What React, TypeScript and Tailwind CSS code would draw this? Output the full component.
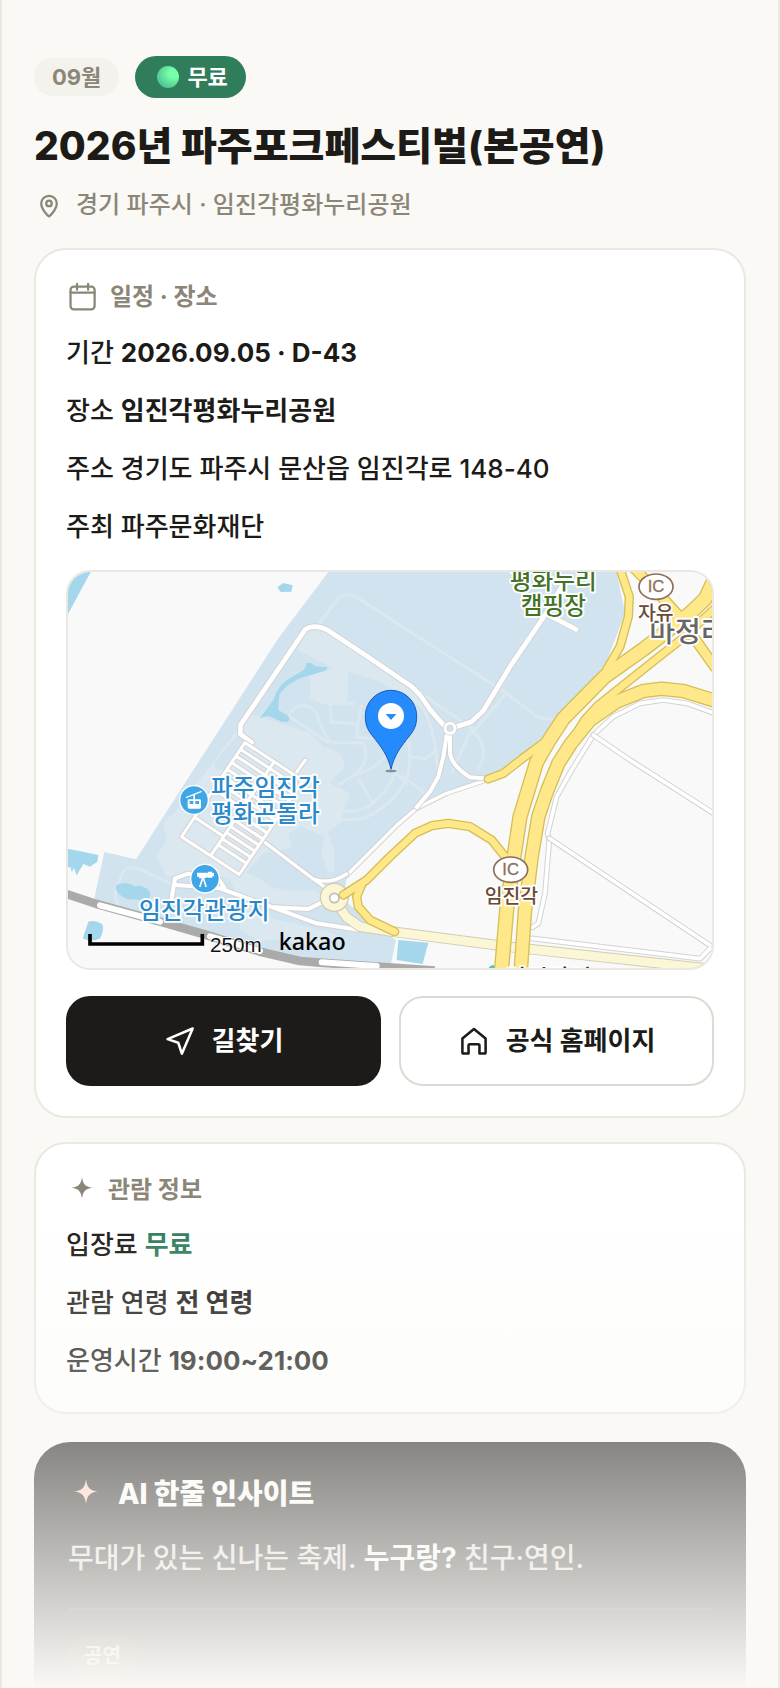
import type { ReactNode } from "react";

type IconProps = { className?: string };

function PinIcon({ className }: IconProps) {
  return (
    <svg viewBox="0 0 24 24" fill="none" stroke="currentColor" strokeWidth="1.8" strokeLinejoin="round" className={className} aria-hidden="true">
      <path d="M12 21.200s-6.200-5.200-6.200-10.400a6.200 6.200 0 0 1 12.400 0c0 5.200-6.200 10.400-6.200 10.400z" />
      <circle cx="12" cy="10.700" r="2.200" />
    </svg>
  );
}

function CalendarIcon({ className }: IconProps) {
  return (
    <svg viewBox="0 0 24 24" fill="none" stroke="currentColor" strokeWidth="1.6" strokeLinecap="round" className={className} aria-hidden="true">
      <rect x="3.2" y="4.600" width="17" height="16.200" rx="2.4" />
      <path d="M3.2 8.900h17M7.800 2.800v4M15.600 2.800v4" />
    </svg>
  );
}

function SparkIcon({ className }: IconProps) {
  return (
    <svg viewBox="0 0 24 24" fill="currentColor" className={className} aria-hidden="true">
      <path d="M12 2.300c.8 5.200 2.200 7.200 7.700 8.100-5.500.9-6.900 2.900-7.700 8.100-.8-5.200-2.200-7.200-7.700-8.100 5.500-.9 6.900-2.900 7.700-8.100z" />
    </svg>
  );
}

function ArrowIcon({ className }: IconProps) {
  return (
    <svg viewBox="0 0 24 24" fill="none" stroke="currentColor" strokeWidth="1.9" strokeLinejoin="round" className={className} aria-hidden="true">
      <path d="M21.500 2.600 2.700 10.600l8 2.700 2.700 8.200z" />
    </svg>
  );
}

function HomeIcon({ className }: IconProps) {
  return (
    <svg viewBox="0 0 24 24" fill="none" stroke="currentColor" strokeWidth="1.9" strokeLinejoin="round" className={className} aria-hidden="true">
      <path d="M3.300 10.200 12 3l8.700 7.200v10.200a1 1 0 0 1-1 1h-3.600v-6a1 1 0 0 0-1-1H8.900a1 1 0 0 0-1 1v6H4.300a1 1 0 0 1-1-1z" />
    </svg>
  );
}

type RoadProps = { d: string; width: number; color?: string; edge?: string; cap?: "butt" | "round" };

function Road({ d, width, color = "#ffffff", edge = "#d3d3d3", cap = "round" }: RoadProps) {
  return (
    <g fill="none" strokeLinejoin="round" strokeLinecap={cap}>
      <path d={d} stroke={edge} strokeWidth={width + 6} />
      <path d={d} stroke={color} strokeWidth={width} />
    </g>
  );
}

const HIGHWAYS = [
  { d: "M1656-10 1684 74 1681 134 1656 224 1615 294", width: 20 },
  { d: "M1700-10 1766 58 1826 124 1876 194 1940 284", width: 26 },
  { d: "M1500 524 1550 444 1590 400 1766 260 1836 205 1940 110", width: 20 },
  { d: "M1261 621 1306 604 1360 562 1430 510", width: 20 },
  { d: "M1300 1200 1316 1014 1338 854 1356 734 1406 570 1444 504 1486 440 1610 314 1726 232 1866 124 1912 80 1940 20", width: 38 },
  { d: "M1358 1200 1371 1014 1391 854 1411 734 1436 660 1471 574 1508 516 1566 444 1646 389 1726 357 1781 350 1846 357 1940 386", width: 36 },
  { d: "M826 969 896 924 966 854 1041 784 1091 761 1141 754 1206 764 1271 804 1311 854", width: 20 },
  { d: "M881 938 866 974 871 1004 906 1044 980 1079", width: 20 },
];

const FOOTPATHS = [
  "M754 154 810 80Q830 62 860 72L966 140 1310 360 1410 436 1470 446",
  "M1030 344 1220 474 1310 370",
  "M660 430 780 512M666 424q40-50 80 0 20 60 40 86l100 4",
  "M786 394 790 450 870 456 880 398M786 394 860 396",
  "M870 456 866 496 910 500 950 480",
  "M800 690q20 50 100 14 70-50 86-120M808 640l50-30q50-40 30-100",
  "M856 608q60-10 100-60M870 620l46 76M960 580l60 60M1000 610l80 60",
  "M1016 500q20 40 0 120-40 80-130 120l-100 6",
  "M1060 400q40 60 50 200M1020 552l50 10 40-30",
  "M1210 474l-60 130M1210 474q60 50 20 120",
  "M140 970l20-60q10-30 50-20l110 50M140 970l10 30",
];

const ROWS_TOP = [0, 24, 48, 72, 96, 120, 144, 168];
const ROWS_BOTTOM = [190, 212, 234, 256, 278, 300];

function ParkingLot() {
  const lines = [
    "M0 0V340",
    "M104 0V340",
    "M206 0V340",
    "M0 340H206",
    "M0 270H104",
    ...ROWS_TOP.map((y) => `M0 ${y}H206`),
    ...ROWS_BOTTOM.map((y) => `M104 ${y}H206`),
  ].join("");

  return (
    <>
      <Road d="M670 622 712 564" width={9} />
      <g transform="matrix(.84 .55 -.56 .83 531 512)">
        <Road d={lines} width={9} />
      </g>
    </>
  );
}

type LabelProps = { x: number; y: number; size: number; color: string; anchor?: "start" | "middle"; children: ReactNode };

function MapLabel({ x, y, size, color, anchor = "start", children }: LabelProps) {
  return (
    <text x={x} y={y} fontSize={size} fill={color} textAnchor={anchor} stroke="#ffffff" strokeWidth="11" strokeLinejoin="round" paintOrder="stroke" fontWeight="500">
      {children}
    </text>
  );
}

function Interchange({ x, y }: { x: number; y: number }) {
  return (
    <g>
      <ellipse cx={x} cy={y} rx="51" ry="38" fill="#ffffff" stroke="#8d705c" strokeWidth="5" />
      <text x={x} y={y + 17} fontSize="50" fill="#8d705c" stroke="#8d705c" strokeWidth="1" textAnchor="middle" fontFamily="Liberation Sans, sans-serif">
        IC
      </text>
    </g>
  );
}

function VenueMap() {
  return (
    <svg
      viewBox="0 0 1932 1188"
      preserveAspectRatio="xMidYMid slice"
      role="img"
      aria-label="임진각평화누리공원 지도"
      className="block w-full font-['Noto_Sans_CJK_KR',sans-serif]"
    >
      <rect width="1932" height="1188" fill="#f9f9f9" />

      {/* park */}
      <path
        d="M781 0 631 199 376 594 204 862 109 840 79 979 90 1000 276 1049 416 1089 576 1139 696 1167 966 1190 984 1104 826 984 836 920 966 779 1046 709 1136 664 1261 622 1416 514 1606 294 1671 124 1646 0z"
        fill="#d1e3ef"
      />
      <g fill="#dce8ef">
        <path d="M712 178 740 160 966 304 1040 352 1090 430 1050 400 936 330 841 299 838 394 776 400 726 380V310L800 290 691 236z" />
        <path d="M516 480 536 510 476 594 441 594 440 570zM326 714l-40 40 10 50-30 50 30 60 60-10 160 20 70-80 150-30 80-60 30-90-60-30 40-50-100-100-180-60z" />
        <path d="M746 540l30-14 34 14q30 30 10 60l-40 20-10 140 30 80v60h-20l-40-110-80-30 40-160z" />
        <path d="M476 904q60-20 130 40 60 20 130 10l40 20-80 40-190-50zM516 1010q60-20 100 30l170 40 60 30-170-20-100 20-60-40z" />
        <path d="M580 1096l120-20 100 16-60 30z" />
      </g>
      <path d="M661 784l40-20 70 30-16 70-50 32-30-60z" fill="#d1e3ef" />
      <g fill="none" stroke="#dce8ef" strokeWidth="9" strokeLinejoin="round">
        {FOOTPATHS.map((d) => (
          <path key={d} d={d} />
        ))}
      </g>

      {/* water */}
      <g fill="#a4d6ec">
        <path d="M0 0H68L0 126zM628 46 646 33 674 40 670 59 638 60z" />
        <path d="M576 439 616 384Q630 340 660 322L708 294Q720 270 714 274 728 268 740 282L779 286 771 296 696 319Q650 340 634 369L631 414 661 432Q668 446 658 450L641 449 601 431z" />
        <path d="M0 830 91 849 88 869 66 884 46 876 26 910 18 888 11 900 8 886 0 886zM146 939q30-14 55 5 20-10 45 15v26l-70-4q-40-20-30-42zM61 1049q20-6 40 6 10 10-4 44-26 14-53 0z" />
        <path d="M991 1104 1081 1112 1064 1176 986 1164z" />
        <circle cx="1275" cy="1194" r="14" fill="#4fc0cc" />
      </g>

      {/* railway */}
      <g fill="none" strokeLinejoin="round">
        <path d="M-10 964 86 996 276 1049 416 1089 576 1139 696 1167 756 1172 1100 1196" stroke="#aaaaaa" strokeWidth="26" />
        <path d="M96 1000 276 1049M426 1093 576 1137M761 1171 926 1182" stroke="#ffffff" strokeWidth="18" strokeLinecap="round" />
      </g>

      {/* local roads */}
      <Road d="M1940 424 1856 394 1786 384 1716 394 1636 434 1576 489 1511 594 1466 674 1439 784 1444 804 1431 964 1411 1054 1394 1066" width={11} />
      <Road d="M1576 489 1686 564 1940 726M1444 799 1926 1120M1391 1099 1896 1160 1926 1130" width={11} />
      <Road d="M1261 622 1136 664 1046 709 986 760 836 910" width={10} />
      <Road d="M561 789 736 921 776 949M736 921Q786 939 836 906" width={10} />
      <Road d="M311 979 321 919 361 905 456 927 470 949M326 939 456 949 616 1007 746 1054 876 1074M616 1006 721 1011 766 989" width={12} />
      <Road d="M551 512 517 486 518 458 712 172Q740 155 778 174L896 252 1031 344 1056 369 1091 419 1131 464M1161 466 1211 449 1246 416 1326 284 1431 129 1481 44M1451 134 1524 172" width={14} />
      <Road d="M1136 489 1126 554 1111 614 1086 659 1046 706M1146 489V544Q1150 580 1206 616L1261 620" width={12} />
      <circle cx="1146" cy="469" r="15" fill="#d1e3ef" stroke="#d3d3d3" strokeWidth="14" />
      <circle cx="1146" cy="469" r="15" fill="none" stroke="#ffffff" strokeWidth="9" />
      <ParkingLot />

      {/* provincial road and roundabout */}
      <Road d="M810 1000 836 1036 876 1064 966 1078 1336 1126 1940 1192" width={26} color="#fbf6d6" edge="#d2cbb4" />
      <circle cx="799" cy="976" r="42" fill="#fbf6d6" stroke="#d2cbb4" strokeWidth="4" />
      <circle cx="799" cy="978" r="14" fill="#ffffff" stroke="#bdbdbd" strokeWidth="5" />

      {/* highways */}
      <g fill="none" strokeLinejoin="round" strokeLinecap="round">
        {HIGHWAYS.map((road) => (
          <path key={road.d} d={road.d} stroke="#d5bf55" strokeWidth={road.width + 8} />
        ))}
        {HIGHWAYS.map((road) => (
          <path key={road.d} d={road.d} stroke="#ffe88a" strokeWidth={road.width} />
        ))}
      </g>

      {/* places */}
      <MapLabel x={1456} y={50} size={71} color="#447227" anchor="middle">평화누리</MapLabel>
      <MapLabel x={1456} y={126} size={71} color="#447227" anchor="middle">캠핑장</MapLabel>
      <MapLabel x={1744} y={209} size={84} color="#666666">마정리</MapLabel>
      <MapLabel x={1710} y={143} size={58} color="#6b4a35">자유</MapLabel>
      <Interchange x={1764} y={44} />
      <MapLabel x={1330} y={993} size={58} color="#6b4a35" anchor="middle">임진각</MapLabel>
      <Interchange x={1328} y={893} />
      <MapLabel x={1440} y={1246} size={71} color="#333333" anchor="middle">임진강역</MapLabel>
      <MapLabel x={429} y={671} size={71} color="#2a89cb">파주임진각</MapLabel>
      <MapLabel x={429} y={751} size={71} color="#2a89cb">평화곤돌라</MapLabel>
      <MapLabel x={213} y={1041} size={71} color="#2a89cb">임진각관광지</MapLabel>

      <circle cx="378" cy="684" r="43" fill="#3fa6e8" stroke="#ffffff" strokeWidth="4" />
      <path d="M354 677 401 658" stroke="#ffffff" strokeWidth="4" />
      <path d="M376 668h5v14h14q4 0 4 4v20q0 4-4 4h-32q-4 0-4-4v-20q0-4 4-4h13zM365 687v9h11v-9zm17 0v9h11v-9z" fill="#ffffff" fillRule="evenodd" />
      <circle cx="411" cy="920" r="43" fill="#3fa6e8" stroke="#ffffff" strokeWidth="4" />
      <path d="M387 902h33v-3h13v4h5v10h-5v4h-13v-1l-11 3 8 26h-5l-7-22-7 22h-5l8-26h-8v-5h-6z" fill="#ffffff" />

      {/* marker */}
      <ellipse cx="969" cy="597" rx="17" ry="4" fill="#7f909f" />
      <path d="M969 592C960 550 938 522 913 491 896 470 892 455 892 432a77 77 0 0 1 154 0c0 23-4 38-21 59-25 31-47 59-56 101z" fill="#258bfc" stroke="#1c5bbd" strokeWidth="3" />
      <circle cx="969" cy="432" r="39" fill="#ffffff" />
      <path d="M953 426h32l-16 18z" fill="#258bfc" />

      {/* scale */}
      <path d="M66 1086V1116H403V1086" fill="none" stroke="#000000" strokeWidth="11" />
      <text x="426" y="1139" fontSize="62" fill="#111111" stroke="#ffffff" strokeWidth="4" paintOrder="stroke" fontFamily="Liberation Sans, sans-serif">
        250m
      </text>
      <text x="632" y="1134" fontSize="70" fontWeight="500" fill="#000000" fontFamily="Noto Sans, sans-serif">
        kakao
      </text>
    </svg>
  );
}

function Card({ children }: { children: ReactNode }) {
  return (
    <section className="rounded-[32px] border-2 border-[#eae8e0] bg-white p-[30px]">
      {children}
    </section>
  );
}

function CardTitle({ icon, children }: { icon: ReactNode; children: ReactNode }) {
  return (
    <h2 className="mb-[18px] flex items-center gap-2.5 text-2xl/[30px] font-bold text-[#8b8678]">
      {icon}
      {children}
    </h2>
  );
}

function App() {
  return (
    <main className="relative border-x-2 border-[#eae8e0] bg-[#faf9f5] px-8 pt-14 font-['Inter','Noto_Sans_CJK_KR',sans-serif] text-[#1c1b17]">
      <header>
        <div className="flex items-center gap-4">
          <span className="rounded-full bg-[#f3f2ec] px-[18px] text-[22px]/[38px] font-bold text-[#8b8678]">09월</span>
          <span className="flex items-center gap-2 rounded-full bg-[#2f7d5b] pr-[18px] pl-[22px] text-[22px]/[42px] font-bold text-white">
            <span className="size-[22px] rounded-full bg-radial-[at_75%_35%] from-[#76ffa8] from-20% via-[#55cf94] via-65% to-[#55a0a0]"></span>
            무료
          </span>
        </div>
        <h1 className="mt-[22px] text-[39px]/[52px] font-extrabold">2026년 파주포크페스티벌(본공연)</h1>
        <p className="mt-[18px] flex items-center gap-3 text-2xl/[30px] font-medium text-[#8b8678]">
          <PinIcon className="size-[30px]" />
          경기 파주시 · 임진각평화누리공원
        </p>
      </header>

      <div className="mt-7 flex flex-col gap-6">
        <Card>
          <CardTitle icon={<CalendarIcon className="size-[34px]" />}>일정 · 장소</CardTitle>
          <div className="flex flex-col gap-4 text-[26px]/[42px] font-medium">
            <p>기간 <b className="font-bold">2026.09.05 · D-43</b></p>
            <p>장소 <b className="font-bold">임진각평화누리공원</b></p>
            <p>주소 경기도 파주시 문산읍 임진각로 148-40</p>
            <p>주최 파주문화재단</p>
          </div>
          <div className="mt-[22px] overflow-hidden rounded-3xl border-2 border-[#eae8e0]">
            <VenueMap />
          </div>
          <div className="mt-[26px] grid grid-cols-2 gap-[18px] text-[26px]/[36px] font-bold">
            <button type="button" className="flex h-[90px] items-center justify-center gap-4 rounded-3xl bg-[#1c1b17] text-white">
              <ArrowIcon className="size-8" />
              길찾기
            </button>
            <a href="#" className="flex h-[90px] items-center justify-center gap-4 rounded-3xl border-2 border-[#dddbd1] bg-white">
              <HomeIcon className="size-8" />
              공식 홈페이지
            </a>
          </div>
        </Card>

        <Card>
          <CardTitle icon={<SparkIcon className="size-8" />}>관람 정보</CardTitle>
          <div className="flex flex-col gap-4 text-[26px]/[42px] font-medium">
            <p>입장료 <b className="font-bold text-[#2f7d5b]">무료</b></p>
            <p>관람 연령 <b className="font-bold">전 연령</b></p>
            <p>운영시간 <b className="font-bold">19:00~21:00</b></p>
          </div>
        </Card>
      </div>

      <section className="mt-7 rounded-t-[36px] bg-[#1c1b17] px-[34px] pt-[34px] pb-2.5 text-white">
        <h2 className="flex items-center gap-3.5 text-[28px]/[36px] font-extrabold">
          <SparkIcon className="size-9 text-[#ffcfc0]" />
          AI 한줄 인사이트
        </h2>
        <p className="mt-6 text-[28px]/[44px] font-medium text-white/85">
          무대가 있는 신나는 축제. <b className="font-bold text-white">누구랑?</b> 친구·연인.
        </p>
        <div className="mt-7 border-t-2 border-white/10 pt-6">
          <span className="inline-block rounded-full bg-[#ff7a50]/15 px-4 text-[20px]/[44px] font-bold text-[#ffcfc0]">공연</span>
        </div>
      </section>

      <div className="pointer-events-none absolute inset-x-0 bottom-0 h-[472px] bg-linear-to-b from-[#faf9f5]/0 to-[#faf9f5]"></div>
    </main>
  );
}

export default App;
